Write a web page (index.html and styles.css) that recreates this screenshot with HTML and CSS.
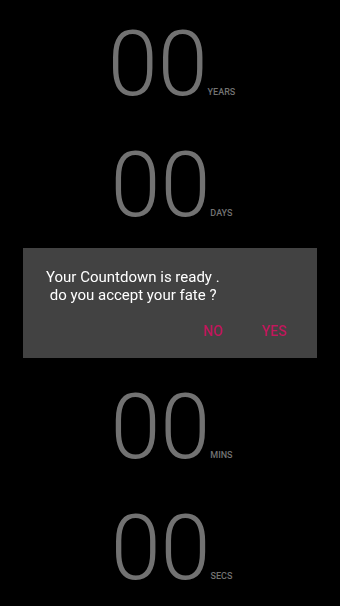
FILE: index.html
```html
<!DOCTYPE html>
<html lang="en">
<head>
    <meta charset="UTF-8">
    <meta name="viewport" content="width=device-width, initial-scale=1.0">
    <title>Countdown</title>
    <link rel="stylesheet" href="styles.css">
</head>
<body>

<div class="countdown">
    <div class="unit-row">
        <span class="digits">00</span>
        <span class="unit-label">YEARS</span>
    </div>
    <div class="unit-row">
        <span class="digits">00</span>
        <span class="unit-label">DAYS</span>
    </div>
    <div class="unit-row">
        <span class="digits">00</span>
        <span class="unit-label">HOURS</span>
    </div>
    <div class="unit-row">
        <span class="digits">00</span>
        <span class="unit-label">MINS</span>
    </div>
    <div class="unit-row">
        <span class="digits">00</span>
        <span class="unit-label">SECS</span>
    </div>
</div>

<div class="dialog-overlay">
    <div class="dialog">
        <p class="dialog-message">Your Countdown is ready .
 do you accept your fate ?</p>
        <div class="dialog-actions">
            <button class="dialog-button">NO</button>
            <button class="dialog-button">YES</button>
        </div>
    </div>
</div>

</body>
</html>
```

FILE: styles.css
```css
body {
    margin: 0;
    height: 606px;
    background-color: #000;
    font-family: Roboto, "Liberation Sans", sans-serif;
    overflow: hidden;
}

.countdown {
    padding-top: 20px;
}

.unit-row {
    height: 121px;
    display: flex;
    justify-content: center;
    align-items: baseline;
    color: #727272;
    padding-left: 3px;
}

.unit-row .digits {
    font-size: 90px;
    font-weight: 300;
    line-height: 1;
}

.unit-row .unit-label {
    font-size: 9px;
    font-weight: 500;
}

/* dialog sits over the countdown */
.dialog-overlay {
    position: fixed;
    top: 0;
    left: 0;
    right: 0;
    bottom: 0;
    display: flex;
    justify-content: center;
    align-items: center;
}

.dialog {
    width: 294px;
    background-color: #424242;
    box-shadow: 0 2px 6px rgba(0, 0, 0, 0.5);
}

.dialog-message {
    margin: 0;
    padding: 20px 23px 0;
    color: #fff;
    font-size: 15px;
    line-height: 18px;
    white-space: pre-wrap;
}

.dialog-actions {
    display: flex;
    justify-content: flex-end;
    gap: 39px;
    padding: 19px 30px 18px;
}

.dialog-button {
    padding: 0;
    border: none;
    background: none;
    color: #c2185b;
    font-family: Roboto, "Liberation Sans", sans-serif;
    font-size: 14px;
    font-weight: 500;
    line-height: 17px;
    cursor: pointer;
}
```
